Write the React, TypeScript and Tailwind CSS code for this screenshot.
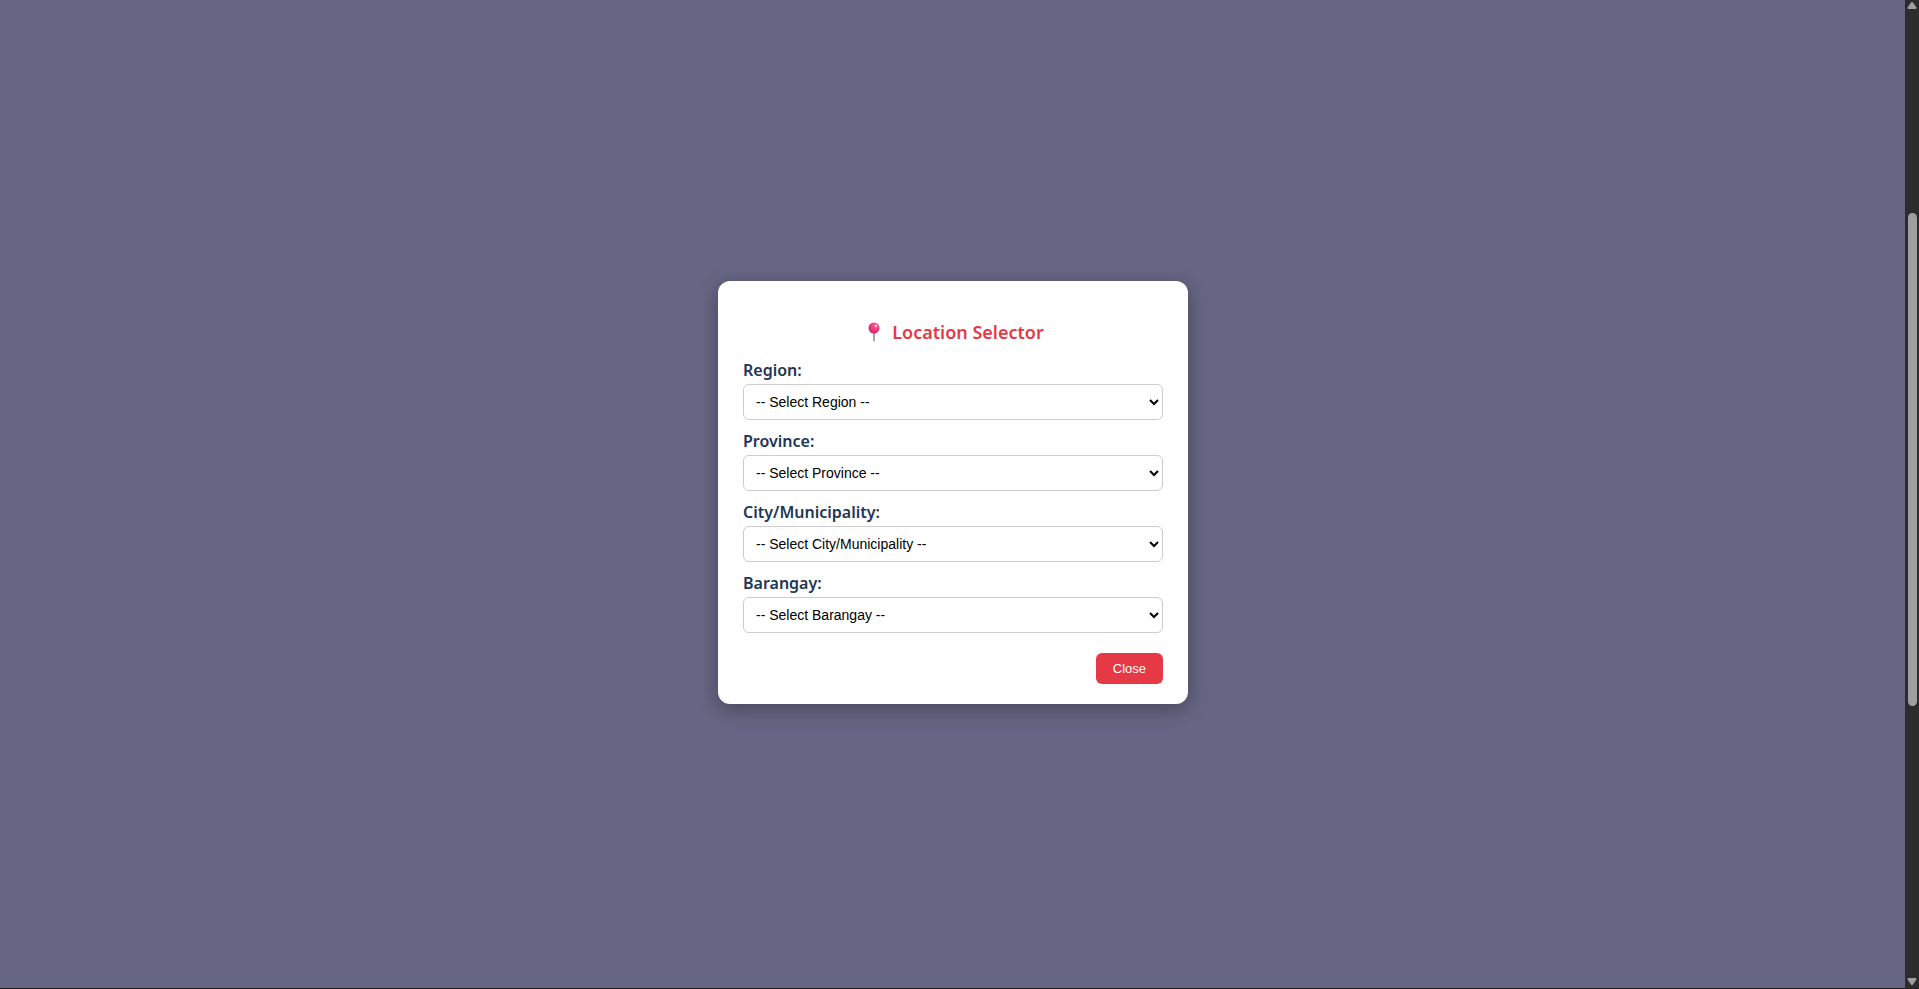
const fields = [
  { id: "region", label: "Region:", placeholder: "-- Select Region --" },
  { id: "province", label: "Province:", placeholder: "-- Select Province --" },
  { id: "city", label: "City/Municipality:", placeholder: "-- Select City/Municipality --" },
  { id: "barangay", label: "Barangay:", placeholder: "-- Select Barangay --" },
];

function Pushpin() {
  return (
    <svg viewBox="0 0 24 20" className="h-5 w-6" aria-hidden="true">
      <defs>
        <radialGradient id="pin-head" cx="0.62" cy="0.3" r="0.75">
          <stop offset="0" stopColor="#ff5c93" />
          <stop offset="0.5" stopColor="#f23b7a" />
          <stop offset="1" stopColor="#c42563" />
        </radialGradient>
      </defs>
      <rect x="11.1" y="10" width="1.8" height="9.6" rx="0.8" fill="#a794b3" />
      <circle cx="12" cy="6" r="5.5" fill="url(#pin-head)" />
      <circle cx="14" cy="3.9" r="1.3" fill="#ffc0dc" />
    </svg>
  );
}

function Field({ id, label, placeholder }: { id: string; label: string; placeholder: string }) {
  return (
    <div className="flex flex-col gap-1">
      <label htmlFor={id} className="text-base leading-5 font-semibold text-[#1d3557]">
        {label}
      </label>
      <select
        id={id}
        className="h-9 w-full rounded-md border border-[#cccccc] bg-white px-2 font-['Liberation_Sans',Arial,sans-serif] text-sm text-black"
      >
        <option>{placeholder}</option>
      </select>
    </div>
  );
}

function Scrollbar() {
  return (
    <div className="flex w-3.5 shrink-0 flex-col items-center bg-[#2c2c2c]" aria-hidden="true">
      <svg viewBox="0 0 10 12" className="h-3 w-2.5">
        <path d="M4 2.6Q5 1.6 6 2.6L9.3 7.2Q10 9 8.5 9H1.5Q0 9 .7 7.2Z" fill="#9f9f9f" />
      </svg>
      <div className="flex w-full flex-1 flex-col items-center">
        <div className="grow-201" />
        <div className="w-[9px] grow-493 rounded-full bg-[#9f9f9f]" />
        <div className="grow-270" />
      </div>
      <svg viewBox="0 0 10 12" className="h-3 w-2.5">
        <path d="M4 8.4Q5 9.4 6 8.4L9.3 3.8Q10 2 8.5 2H1.5Q0 2 .7 3.8Z" fill="#9f9f9f" />
      </svg>
    </div>
  );
}

export default function App() {
  return (
    <div className="flex h-screen border-b border-[#1c1c1c] bg-[#666583] font-['Noto_Sans',sans-serif]">
      <main className="flex flex-1 items-center justify-center pb-[3px] pl-px">
        <section
          role="dialog"
          aria-labelledby="dialog-title"
          className="w-full max-w-[470px] rounded-xl bg-white px-[25px] pt-[37px] pb-5 shadow-[0_5px_20px_rgba(0,0,0,0.3)]"
        >
          <h2
            id="dialog-title"
            className="mb-3.5 flex items-center justify-center gap-1.5 text-lg leading-7 font-semibold text-[#e63946]"
          >
            <Pushpin />
            Location Selector
          </h2>
          <form className="flex flex-col gap-[11px]">
            {fields.map((field) => (
              <Field key={field.id} {...field} />
            ))}
            <button
              type="button"
              className="mt-[9px] self-end rounded-md bg-[#e63946] px-[17px] py-2 font-['Liberation_Sans',Arial,sans-serif] text-[13px] leading-[15px] font-medium text-white"
            >
              Close
            </button>
          </form>
        </section>
      </main>
      <Scrollbar />
    </div>
  );
}
